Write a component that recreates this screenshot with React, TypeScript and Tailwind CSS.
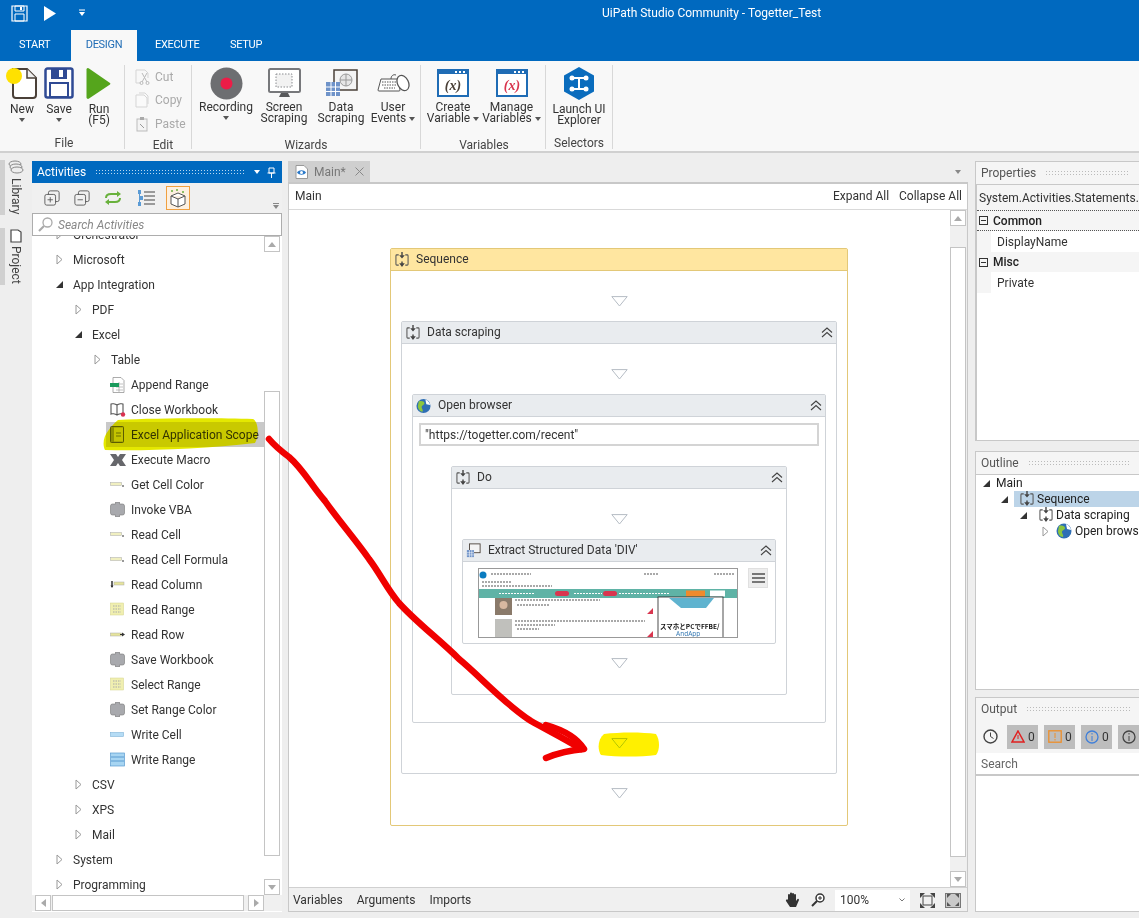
import type { ReactNode } from 'react'

const font = "font-['Roboto','Noto_Sans',sans-serif]"

function Caret({ className = '' }: { className?: string }) {
    return <span className={`inline-block w-0 h-0 border-x-[3.5px] border-x-transparent border-t-[4px] border-t-[#555] ${className}`} />
}

// ribbon icons
function NewIcon() {
    return (
        <svg width="32" height="34" viewBox="0 0 32 34">
            <path d="M7 3h14l9 9v17a3 3 0 0 1-3 3H10a3 3 0 0 1-3-3z" fill="#fff" stroke="#4a4038" strokeWidth="2" />
            <path d="M21 3v9h9" fill="#eee" stroke="#4a4038" strokeWidth="1.5" />
            <circle cx="8" cy="10" r="8" fill="#ffe100" />
        </svg>
    )
}
function SaveIcon() {
    return (
        <svg width="30" height="32" viewBox="0 0 30 32">
            <path d="M1.500 3.500a2 2 0 0 1 2-2h23a2 2 0 0 1 2 2v25a2 2 0 0 1-2 2h-23a2 2 0 0 1-2-2z" fill="#fff" stroke="#2f4a94" strokeWidth="2.500" />
            <rect x="7" y="1" width="16" height="11" fill="#2f4a94" />
            <rect x="15" y="3" width="4" height="7" fill="#fff" />
            <rect x="6" y="16" width="18" height="14" fill="#fff" stroke="#2f4a94" strokeWidth="2" />
        </svg>
    )
}
function RunIcon() {
    return (
        <svg width="26" height="33" viewBox="0 0 26 33">
            <path d="M3 1.500 24 16a1 1 0 0 1 0 1.500L3 31.500a1.500 1.500 0 0 1-2.500-1V3a1.500 1.500 0 0 1 2.500-1.500z" fill="#55a51c" />
        </svg>
    )
}
function RecordIcon() {
    return (
        <svg width="33" height="33" viewBox="0 0 33 33">
            <circle cx="16.500" cy="16.500" r="16" fill="#6d6e71" />
            <circle cx="16.500" cy="16.500" r="6" fill="#ed1c47" />
        </svg>
    )
}
function ScreenIcon() {
    return (
        <svg width="33" height="31" viewBox="0 0 33 31">
            <rect x="1" y="1" width="31" height="23" rx="1.500" fill="#fff" stroke="#77787b" strokeWidth="2" />
            <rect x="8" y="6" width="16" height="13" fill="#f2f2f2" stroke="#8a8c90" strokeWidth="1" strokeDasharray="1.500 1.500" />
            <path d="M13 25h7l2 4H11z" fill="#58595b" />
        </svg>
    )
}
function DataIcon() {
    return (
        <svg width="33" height="28" viewBox="0 0 33 28">
            <rect x="9" y="1" width="23" height="20" fill="#f4f4f4" stroke="#4a4038" strokeWidth="1.500" />
            <circle cx="21" cy="11" r="6" fill="#e6e6e6" stroke="#999" />
            <path d="M15 11h12M21 5v12" stroke="#999" />
            <rect x="1" y="13" width="14" height="14" fill="#6f93c9" />
            <path d="M1 18h14M1 22.500h14M6 13v14M10.500 13v14" stroke="#fff" />
        </svg>
    )
}
function UserEventsIcon() {
    return (
        <svg width="33" height="20" viewBox="0 0 33 20">
            <path d="M4 6h17l2 11a1 1 0 0 1-1 1H2a1 1 0 0 1-1-1z" fill="#fff" stroke="#555" />
            <path d="M5 9h15M5 12h15M7 15h11" stroke="#555" strokeDasharray="1.500 1" />
            <path d="M14 6c0-3 2-5 5-4" fill="none" stroke="#555" />
            <ellipse cx="26" cy="10" rx="5.500" ry="8" transform="rotate(-25 26 10)" fill="#fff" stroke="#555" strokeWidth="1.300" />
        </svg>
    )
}
function VarIcon({ color }: { color: string }) {
    return (
        <svg width="32" height="28" viewBox="0 0 32 28">
            <rect width="32" height="28" fill="#1f6cb5" />
            <rect x="2" y="5" width="28" height="21" fill="#fff" />
            <rect x="18" y="2" width="2" height="2" fill="#fff" />
            <rect x="22" y="2" width="2" height="2" fill="#fff" />
            <rect x="26" y="2" width="2" height="2" fill="#fff" />
            <text x="16" y="21" textAnchor="middle" fontSize="14" fontWeight="700" fontStyle="italic" fontFamily="Liberation Serif, serif" fill={color}>(x)</text>
        </svg>
    )
}
function HexIcon() {
    return (
        <svg width="32" height="33" viewBox="0 0 32 33">
            <path d="M16 0 31 8.500v16L16 33 1 24.500v-16z" fill="#0a6cbd" />
            <path d="M10 11h12M16 11v11M10 22h12" stroke="#fff" strokeWidth="2" />
            <circle cx="9" cy="11" r="2.500" fill="#fff" /><circle cx="23" cy="11" r="2.500" fill="#fff" />
            <circle cx="9" cy="22" r="2.500" fill="#fff" /><circle cx="23" cy="22" r="2.500" fill="#fff" />
        </svg>
    )
}

function RibbonBtn({ w, icon, lines, caret, caretInline, top }: { w: number; icon: ReactNode; lines: string[]; caret?: boolean; caretInline?: boolean; top: string }) {
    return (
        <div className="flex flex-col items-center" style={{ width: w }}>
            <div className="h-[34px] flex items-center justify-center">{icon}</div>
            <div className={`${top} text-center leading-[11px] text-[#333] text-[12px] whitespace-nowrap`}>
                {lines.map((l, i) => (
                    <div key={l}>{l}{caretInline && i === lines.length - 1 && <Caret className="ml-[3px] mb-[1px]" />}</div>
                ))}
            </div>
            {caret && <Caret className="mt-[3px]" />}
        </div>
    )
}

function RibbonGroup({ label, children, className = '', low }: { label: string; children: ReactNode; className?: string; low?: boolean }) {
    return (
        <div className={`flex flex-col h-[84px] border-r border-[#d8d8d8] ${className}`}>
            <div className="flex flex-1 pt-[1px]">{children}</div>
            <div className={`text-center text-[12px] text-[#444] leading-[14px] ${low ? '-mb-[3px]' : '-mb-[1px]'}`}>{label}</div>
        </div>
    )
}

function EditRow({ label, icon }: { label: string; icon: ReactNode }) {
    return (
        <div className="flex items-center h-[23.500px] gap-[5px] text-[12px] text-[#aaa]">
            <svg width="15" height="16" viewBox="0 0 15 16">{icon}</svg>
            {label}
        </div>
    )
}

function Ribbon() {
    return (
        <div className="h-[92px] bg-[#f8f8f8] border-b-2 border-[#d0d0d0] flex items-start pt-[4px] shrink-0">
            <RibbonGroup label="File" className="w-[125px] pl-[4px]">
                <RibbonBtn w={36} icon={<NewIcon />} lines={['New']} caret top="mt-[4px]" />
                <RibbonBtn w={38} icon={<SaveIcon />} lines={['Save']} caret top="mt-[4px]" />
                <RibbonBtn w={42} icon={<RunIcon />} lines={['Run', '(F5)']} top="mt-[4px]" />
            </RibbonGroup>
            <RibbonGroup label="Edit" low className="w-[67px] pl-[10px]">
                <div className="flex flex-col -mt-[1px]">
                    <EditRow label="Cut" icon={<><path d="M1 1h9l3 3v5M1 1v13h5" fill="none" stroke="#d5d5d5" /><path d="M7 4l5 9M12 4l-5 9" stroke="#bbb" /><circle cx="6.500" cy="14" r="1.500" fill="none" stroke="#bbb" /><circle cx="12.500" cy="14" r="1.500" fill="none" stroke="#bbb" /></>} />
                    <EditRow label="Copy" icon={<><path d="M1 3h8l3 3v9H1z" fill="#fafafa" stroke="#d5d5d5" /><path d="M4 1h6l3 3v8" fill="none" stroke="#d5d5d5" /></>} />
                    <EditRow label="Paste" icon={<><rect x="2" y="3" width="10" height="12" fill="#f4f4f4" stroke="#bbb" /><rect x="5" y="1" width="4" height="3" fill="#aaa" /><path d="M5 8l4 4" stroke="#999" /></>} />
                </div>
            </RibbonGroup>
            <RibbonGroup label="Wizards" low className="w-[229px]">
                <RibbonBtn w={68} icon={<RecordIcon />} lines={['Recording']} caret top="mt-[2px]" />
                <RibbonBtn w={48} icon={<ScreenIcon />} lines={['Screen', 'Scraping']} top="mt-[2px]" />
                <RibbonBtn w={66} icon={<DataIcon />} lines={['Data', 'Scraping']} top="mt-[2px]" />
                <RibbonBtn w={38} icon={<UserEventsIcon />} lines={['User', 'Events']} caretInline top="mt-[2px]" />
            </RibbonGroup>
            <RibbonGroup label="Variables" low className="w-[125px] pl-[2px]">
                <RibbonBtn w={60} icon={<VarIcon color="#4a4038" />} lines={['Create', 'Variable']} caretInline top="mt-[2px]" />
                <div className="w-[1px]" />
                <RibbonBtn w={55} icon={<VarIcon color="#d9364f" />} lines={['Manage', 'Variables']} caretInline top="mt-[2px]" />
            </RibbonGroup>
            <RibbonGroup label="Selectors" className="w-[67px]">
                <RibbonBtn w={66} icon={<HexIcon />} lines={['Launch UI', 'Explorer']} top="mt-[4px]" />
            </RibbonGroup>
        </div>
    )
}

function TitleBar() {
    return (
        <div className="h-[61px] bg-[#0069bf] text-white shrink-0 flex flex-col">
            <div className="h-[30px] flex items-center pl-[11px]">
                <svg width="17" height="18" viewBox="0 0 17 18" className="mb-[4px]">
                    <path d="M1 2h15v15H1z" fill="none" stroke="#fff" strokeWidth="1.200" />
                    <path d="M4 2h9v5H4zM4 10h9v7H4z" fill="none" stroke="#fff" />
                    <rect x="9" y="3" width="2" height="3" fill="#fff" />
                </svg>
                <svg width="14" height="17" viewBox="0 0 14 17" className="ml-[15px] mb-[4px]"><path d="M1 1 13 8.500 1 16z" fill="#fff" /></svg>
                <svg width="8" height="8" viewBox="0 0 8 8" className="ml-[21px] mb-[4px]"><path d="M1 1h6" stroke="#fff" /><path d="M1 3h6L4 7z" fill="#fff" /></svg>
                <div className="text-[12px] ml-[516px] mb-[4px] whitespace-nowrap">UiPath Studio Community - Togetter_Test</div>
            </div>
            <div className="flex h-[31px] items-center text-[11px] tracking-[-0.3px] uppercase">
                <div className="pl-[19px] w-[71px]">Start</div>
                <div className="w-[66px] h-full bg-[#f8f8f8] text-[#1f6cb5] flex items-center justify-center">Design</div>
                <div className="pl-[18px] w-[93px]">Execute</div>
                <div>Setup</div>
            </div>
        </div>
    )
}

function Gripper({ light }: { light?: boolean }) {
    return <div className={`flex-1 h-[7px] mx-[9px] ${light ? "bg-[radial-gradient(#b9d8f0_0.7px,transparent_0.8px)]" : "bg-[radial-gradient(#bbb_0.7px,transparent_0.8px)]"} bg-[length:3px_3px]`} />
}

function ArrowOpen() {
    return <svg width="7" height="11" viewBox="0 0 7 11"><path d="M1 1 6 5.500 1 10z" fill="#fff" stroke="#999" /></svg>
}
function ArrowDown() {
    return <svg width="7" height="7" viewBox="0 0 7 7"><path d="M7 0v7H0z" fill="#333" /></svg>
}

// little activity icons in the tree
function LeafIcon({ kind }: { kind: string }) {
    if (kind === 'gear') return (
        <svg width="15" height="15" viewBox="0 0 15 15"><path d="M5.500 0h4v2h3a2 2 0 0 1 2 2v7a2 2 0 0 1-2 2h-3v2h-4v-2h-3a2 2 0 0 1-2-2V4a2 2 0 0 1 2-2h3z" fill="#a8a9ad" stroke="#777" strokeWidth="0.600" /></svg>
    )
    if (kind === 'cell') return <svg width="15" height="15" viewBox="0 0 15 15"><rect x="0.500" y="5.500" width="11" height="3" fill="#f0efc0" stroke="#aaa" strokeWidth="0.500" /><rect x="12" y="8" width="2" height="2" fill="#999" /></svg>
    if (kind === 'column') return <svg width="15" height="15" viewBox="0 0 15 15"><rect x="4" y="5" width="10" height="3" fill="#e6e49c" stroke="#aaa" strokeWidth="0.500" /><path d="M2 4v6" stroke="#333" strokeWidth="1.500" /><path d="M0.500 8.500h3L2 11z" fill="#333" /></svg>
    if (kind === 'range') return <svg width="15" height="15" viewBox="0 0 15 15"><rect x="0.500" y="1" width="13" height="12" fill="#f0efb0" stroke="#d4d28a" strokeWidth="0.500" /><path d="M3 4h8M3 7h8M3 10h8" stroke="#aaa" strokeDasharray="1.500 1" /></svg>
    if (kind === 'row') return <svg width="15" height="15" viewBox="0 0 15 15"><rect x="0.500" y="6" width="11" height="3" fill="#e6e49c" stroke="#aaa" strokeWidth="0.500" /><path d="M10 7.500h3" stroke="#333" /><path d="M12 5.500l3 2-3 2z" fill="#333" /></svg>
    if (kind === 'wcell') return <svg width="15" height="15" viewBox="0 0 15 15"><rect x="0.500" y="5.500" width="13" height="4" fill="#b5dcf5" stroke="#7fb2d8" strokeWidth="0.600" /></svg>
    if (kind === 'wrange') return <svg width="15" height="15" viewBox="0 0 15 15"><rect x="0.500" y="1" width="14" height="13" fill="#a7d5f2" stroke="#5a9bd0" strokeWidth="0.700" /><path d="M1 5h13M1 9h13" stroke="#5a9bd0" /></svg>
    if (kind === 'append') return <svg width="15" height="16" viewBox="0 0 15 16"><path d="M3 .5h8l3 3v12H3z" fill="#fff" stroke="#888" strokeWidth="0.700" /><path d="M6 7h7M6 10h7M6 13h7M9 5v10" stroke="#999" strokeWidth="0.600" /><rect x="0" y="6" width="9" height="4" fill="#1a9a5c" /></svg>
    if (kind === 'close') return <svg width="16" height="15" viewBox="0 0 16 15"><path d="M7 3C5 1.500 2 1.500 1 2v10c1-.5 4-.5 6 1 2-1.500 5-1.500 6-1V2c-1-.5-4-.5-6 1zM7 3v10" fill="#fff" stroke="#555" strokeWidth="1.100" /><circle cx="13" cy="12.500" r="2.200" fill="#d9304f" /></svg>
    if (kind === 'scope') return <svg width="15" height="17" viewBox="0 0 15 17"><rect x="0.500" y="0.500" width="13" height="16" rx="1" fill="#8f9052" stroke="#5b5c33" /><rect x="4" y="1.500" width="9" height="14" fill="#c4c45c" /><path d="M6 7h5M6 10h5" stroke="#6d6e3a" /></svg>
    if (kind === 'macro') return <svg width="16" height="14" viewBox="0 0 16 14"><path d="M0 1h6l2 3 2-3h6l-4 6 4 6h-6L8 10l-2 3H0l4-6z" fill="#66676b" /></svg>
    return null
}

function TreeRow({ level, label, arrow, icon, selected }: { level: number; label: string; arrow?: 'open' | 'down'; icon?: string; selected?: boolean }) {
    const pad = [55, 74, 93, 106][level]
    return (
        <div className="h-[25px] flex items-center text-[12px] text-[#333] whitespace-nowrap" style={{ paddingLeft: pad - 32 }}>
            {arrow ? (
                <span className="w-[18px] flex items-center pl-[1px]">{arrow === 'open' ? <ArrowOpen /> : <ArrowDown />}</span>
            ) : (
                <span className={`h-full w-[25px] flex items-center pl-[4px] ${selected ? 'bg-[#c9c9c9]' : ''}`}>{icon && <LeafIcon kind={icon} />}</span>
            )}
            <span className={`h-full flex items-center ${selected ? 'bg-[#c9c9c9] pr-[5px]' : ''}`}>{label}</span>
        </div>
    )
}

function ScrollBtn({ dir }: { dir: 'up' | 'down' | 'right' | 'left' }) {
    const path = { up: 'M0 5 4 0l4 5z', down: 'M0 0h8L4 5z', right: 'M0 0l5 4-5 4z', left: 'M5 0 0 4l5 4z' }[dir]
    const box = dir === 'left' || dir === 'right' ? '0 0 5 8' : '0 0 8 5'
    return (
        <div className="w-[16px] h-[16px] bg-white border border-[#c4c4c4] flex items-center justify-center shrink-0">
            <svg width={dir === 'left' || dir === 'right' ? 5 : 8} height={dir === 'left' || dir === 'right' ? 8 : 5} viewBox={box}><path d={path} fill="#aaa" /></svg>
        </div>
    )
}

const treeRows: { level: number; label: string; arrow?: 'open' | 'down'; icon?: string; selected?: boolean }[] = [
    { level: 0, label: 'Orchestrator', arrow: 'open' },
    { level: 0, label: 'Microsoft', arrow: 'open' },
    { level: 0, label: 'App Integration', arrow: 'down' },
    { level: 1, label: 'PDF', arrow: 'open' },
    { level: 1, label: 'Excel', arrow: 'down' },
    { level: 2, label: 'Table', arrow: 'open' },
    { level: 3, label: 'Append Range', icon: 'append' },
    { level: 3, label: 'Close Workbook', icon: 'close' },
    { level: 3, label: 'Excel Application Scope', icon: 'scope', selected: true },
    { level: 3, label: 'Execute Macro', icon: 'macro' },
    { level: 3, label: 'Get Cell Color', icon: 'cell' },
    { level: 3, label: 'Invoke VBA', icon: 'gear' },
    { level: 3, label: 'Read Cell', icon: 'cell' },
    { level: 3, label: 'Read Cell Formula', icon: 'cell' },
    { level: 3, label: 'Read Column', icon: 'column' },
    { level: 3, label: 'Read Range', icon: 'range' },
    { level: 3, label: 'Read Row', icon: 'row' },
    { level: 3, label: 'Save Workbook', icon: 'gear' },
    { level: 3, label: 'Select Range', icon: 'range' },
    { level: 3, label: 'Set Range Color', icon: 'gear' },
    { level: 3, label: 'Write Cell', icon: 'wcell' },
    { level: 3, label: 'Write Range', icon: 'wrange' },
    { level: 1, label: 'CSV', arrow: 'open' },
    { level: 1, label: 'XPS', arrow: 'open' },
    { level: 1, label: 'Mail', arrow: 'open' },
    { level: 0, label: 'System', arrow: 'open' },
    { level: 0, label: 'Programming', arrow: 'open' },
]

function ActivitiesPanel() {
    return (
        <div className="w-[250px] h-[751px] flex flex-col shrink-0">
            <div className="h-[22px] bg-[#0069bf] text-white text-[12px] flex items-center pl-[5px] pr-[6px] shrink-0">
                Activities
                <Gripper light />
                <Caret className="border-t-white mr-[7px]" />
                <svg width="9" height="11" viewBox="0 0 9 11"><path d="M2 1h5v5H2zM0.500 6h8M4.500 6v5" fill="none" stroke="#fff" /></svg>
            </div>
            <div className="h-[30px] bg-[#f0f0f0] flex items-center pl-[12px] gap-[14px] shrink-0 relative">
                <svg width="16" height="16" viewBox="0 0 18 18"><rect x="5" y="1" width="12" height="12" rx="2" fill="none" stroke="#555" /><rect x="1" y="5" width="12" height="12" rx="2" fill="#f0f0f0" stroke="#555" /><path d="M4 11h6M7 8v6" stroke="#555" /></svg>
                <svg width="16" height="16" viewBox="0 0 18 18"><rect x="5" y="1" width="12" height="12" rx="2" fill="none" stroke="#555" /><rect x="1" y="5" width="12" height="12" rx="2" fill="#f0f0f0" stroke="#555" /><path d="M4 11h6" stroke="#555" /></svg>
                <svg width="19" height="14" viewBox="0 0 19 14"><path d="M2 7c0-3 2-4 5-4h7M16 7c0 3-2 4-5 4H4" fill="none" stroke="#69b13c" strokeWidth="2" /><path d="M13 0l4 3-4 3zM5 8l-4 3 4 3z" fill="#69b13c" /></svg>
                <svg width="18" height="16" viewBox="0 0 18 16"><path d="M7 2h11M7 6h11M7 10h11M7 14h11" stroke="#444" /><rect x="1" y="0" width="3" height="4" fill="#5b9bd5" /><rect x="3" y="6" width="3" height="4" fill="#5b9bd5" /><rect x="1" y="12" width="3" height="4" fill="#5b9bd5" /><path d="M2.500 4v8" stroke="#5b9bd5" /></svg>
                <div className="w-[24px] h-[24px] -ml-[3px] border border-[#f0a040] bg-[#fdf0e0] flex items-center justify-center">
                    <svg width="18" height="19" viewBox="0 0 18 19"><path d="M2 7l7-3 7 3v8l-7 3-7-3zM2 7l7 3 7-3M9 10v8" fill="#fff" stroke="#555" /><circle cx="3" cy="2" r="1" fill="#69b13c" /><circle cx="8" cy="1" r="1" fill="#69b13c" /><circle cx="14" cy="3" r="1" fill="#69b13c" /></svg>
                </div>
                <div className="absolute right-[3px] bottom-[4px] flex flex-col items-center gap-[1px]">
                    <div className="w-[6px] h-[1px] bg-[#888]" />
                    <Caret className="border-t-[#888] border-x-[3px] border-t-[3px]" />
                </div>
            </div>
            <div className="h-[23px] bg-white border border-[#adadad] flex items-center pl-[5px] gap-[5px] shrink-0 text-[12px] italic text-[#888]">
                <svg width="15" height="15" viewBox="0 0 15 15"><circle cx="9.500" cy="5.500" r="4.500" fill="none" stroke="#aaa" strokeWidth="1.300" /><path d="M6 9l-5 5" stroke="#aaa" strokeWidth="2.200" /></svg>
                Search Activities
            </div>
            <div className="flex-1 bg-white flex min-h-0 overflow-hidden">
                <div className="flex-1 overflow-hidden relative">
                    <div className="-mt-[14px]">
                        {treeRows.map(r => <TreeRow key={r.label} {...r} />)}
                    </div>
                </div>
            </div>
        </div>
    )
}

function SeqIcon() {
    return (
        <svg width="14" height="16" viewBox="0 0 15 17">
            <path d="M4 3H2a1 1 0 0 0-1 1v9a1 1 0 0 0 1 1h2M11 3h2a1 1 0 0 1 1 1v9a1 1 0 0 1-1 1h-2" fill="none" stroke="#555" strokeWidth="1.100" />
            <path d="M7.500 0v4M7.500 10v4" stroke="#444" strokeWidth="1.500" />
            <path d="M4.500 3.500h6l-3 3.500zM4.500 12h6l-3 4z" fill="#444" />
        </svg>
    )
}
function GlobeIcon() {
    return (
        <svg width="16" height="16" viewBox="0 0 16 16">
            <circle cx="8" cy="8" r="7.500" fill="#2f6fb5" />
            <path d="M3 3c3-1 6 0 6 2s-3 2-3 4 2 3 1 5c-3 0-5-3-5-6z" fill="#8cc63f" />
            <path d="M10 1c3 1 5 4 5 6l-4-1z" fill="#fff" />
        </svg>
    )
}
function ExtractIcon() {
    return (
        <svg width="17" height="17" viewBox="0 0 17 17">
            <rect x="4" y="1" width="12" height="10" fill="#f4f4f4" stroke="#4a4038" />
            <rect x="1" y="8" width="8" height="8" fill="#6f93c9" />
            <path d="M1 11h8M1 13.500h8M4 8v8M6.500 8v8" stroke="#fff" strokeWidth="0.600" />
        </svg>
    )
}

function Drop({ className = '' }: { className?: string }) {
    return (
        <div className={`flex justify-center ${className}`}>
            <svg width="17" height="11" viewBox="0 0 17 11"><path d="M.8.6h15.400L8.500 10z" fill="#fff" stroke="#b5bcc4" /></svg>
        </div>
    )
}

function Chevrons() {
    return (
        <svg width="12" height="11" viewBox="0 0 12 11" className="ml-auto mr-[3px]">
            <path d="M1 5.500 6 1l5 4.500M1 10l5-4.500 5 4.500" fill="none" stroke="#444" strokeWidth="1.100" />
        </svg>
    )
}

function Node({ title, icon, className = '', bodyClass = '', children, selected, collapse = true }: { title: string; icon: ReactNode; className?: string; bodyClass?: string; children: ReactNode; selected?: boolean; collapse?: boolean }) {
    return (
        <div className={`border rounded-[2px] bg-white ${selected ? 'border-[#e3c878]' : 'border-[#cfd3d8]'} ${className}`}>
            <div className={`h-[22px] flex items-center pl-[3px] gap-[7px] text-[12px] text-[#333] border-b ${selected ? 'bg-[#ffe6a0] border-[#e3c878]' : 'bg-[#e9ecef] border-[#cfd3d8]'}`}>
                <span className="w-[15px] flex justify-center">{icon}</span>
                <span className="-mt-[2px]">{title}</span>
                {collapse && <Chevrons />}
            </div>
            <div className={bodyClass}>{children}</div>
        </div>
    )
}

function Thumbnail() {
    return (
        <svg width="260" height="70" viewBox="0 0 258 68" className="border border-[#999] shrink-0">
            <rect width="258" height="68" fill="#fff" />
            <circle cx="4" cy="6" r="3.500" fill="#0a7cc0" />
            <path d="M12 5h40M165 5h14M235 5h20M3 13h30M3 17h70" stroke="#555" strokeWidth="1.200" strokeDasharray="2 1" />
            <rect y="20" width="258" height="9" fill="#5fb3a6" />
            <path d="M20 24.500h36M95 24.500h28M140 24.500h50" stroke="#fff" strokeDasharray="2 1" />
            <rect x="76" y="22" width="14" height="5" rx="2.500" fill="#d9364f" />
            <rect x="124" y="22" width="14" height="5" rx="2.500" fill="#d9364f" />
            <rect x="207" y="21.500" width="19" height="6" fill="#f08a2c" />
            <rect x="231" y="21.500" width="15" height="6" fill="#fff" />
            <rect x="16" y="29" width="17" height="17" fill="#8a7a6a" />
            <circle cx="24.500" cy="36" r="4" fill="#d8b8a0" />
            <rect x="16" y="50" width="17" height="18" fill="#c0c0bc" />
            <path d="M36 31h85M38 36h32M36 52h130M36 56h40M38 60h22" stroke="#555" strokeWidth="1.200" strokeDasharray="2 1" />
            <path d="M168 45l6-6v6zM168 68l6-6v6z" fill="#d9364f" />
            <rect x="179" y="28" width="65" height="42" fill="#fff" stroke="#222" strokeWidth="0.800" />
            <path d="M190 29h45l-8 10h-25z" fill="#5fb3cf" />
            <text x="181" y="60" fontSize="6.500" fontWeight="700" fill="#111" fontFamily="Noto Sans CJK JP, sans-serif">スマホとPCでFFBE/</text>
            <text x="197" y="67" fontSize="6.500" fill="#3a7cb5" fontFamily="Noto Sans, sans-serif">AndApp</text>
        </svg>
    )
}

function Canvas() {
    return (
        <div className="flex-1 bg-white pt-[38px] pl-[101px] overflow-hidden">
            <Node title="Sequence" icon={<SeqIcon />} selected collapse={false} className="w-[458px] h-[578px]" bodyClass="px-[10px]">
                <Drop className="mt-[25px] mb-[14px]" />
                <Node title="Data scraping" icon={<SeqIcon />} className="w-[436px] h-[453px]" bodyClass="px-[10px]">
                    <Drop className="mt-[25px] mb-[14px]" />
                    <Node title="Open browser" icon={<GlobeIcon />} className="w-[414px] h-[329px]" bodyClass="px-[6px]">
                        <div className="mt-[6px] h-[23px] pt-[1px] border-2 border-[#d4d4d4] flex items-center px-[4px] text-[12px] text-[#333]">"https://togetter.com/recent"</div>
                        <Node title="Do" icon={<SeqIcon />} className="w-[336px] h-[229px] mt-[20px] ml-[32px]" bodyClass="px-[10px]">
                            <Drop className="mt-[25px] mb-[14px]" />
                            <Node title="Extract Structured Data 'DIV'" icon={<ExtractIcon />} className="w-[314px] h-[105px]">
                                <div className="flex pl-[15px] pt-[6px] gap-[10px]">
                                    <Thumbnail />
                                    <div className="w-[20px] h-[20px] bg-[#ededed] border border-[#e0e0e0] flex flex-col justify-center items-center gap-[2px]">
                                        <div className="w-[13px] h-[2px] bg-[#777]" />
                                        <div className="w-[13px] h-[2px] bg-[#777]" />
                                        <div className="w-[13px] h-[2px] bg-[#777]" />
                                    </div>
                                </div>
                            </Node>
                            <Drop className="mt-[14px]" />
                        </Node>
                    </Node>
                    <Drop className="mt-[15px]" />
                </Node>
                <Drop className="mt-[14px]" />
            </Node>
        </div>
    )
}

function DocPanel() {
    return (
        <div className="w-[680px] h-[752px] flex flex-col shrink-0">
            <div className="h-[22px] flex items-end justify-between shrink-0">
                <div className="w-[82px] h-[21px] bg-[#cfcfcf] flex items-center pl-[7px] gap-[6px] text-[12px] text-[#777]">
                    <svg width="13" height="14" viewBox="0 0 13 14"><path d="M1 .5h8l3.500 3.500v9.500H1z" fill="#fff" stroke="#999" /><path d="M2 7.500c2-3 7-3 9 0-2 3-7 3-9 0z" fill="#2a78c8" /><circle cx="6.500" cy="7.500" r="1.500" fill="#fff" /></svg>
                    Main*
                    <svg width="9" height="9" viewBox="0 0 9 9" className="ml-[3px]"><path d="M.5.500l8 8M8.500.500l-8 8" stroke="#888" /></svg>
                </div>
                <Caret className="border-t-[#888] mb-[8px] mr-[7px]" />
            </div>
            <div className="flex-1 min-h-0 flex flex-col border-t-2 border-x border-b border-[#c8c8c8]">
                <div className="h-[26px] bg-white border-b border-[#d9d9d9] flex items-center justify-between pl-[6px] pr-[5px] pb-[2px] text-[12px] text-[#333] shrink-0">
                    <span>Main</span>
                    <span className="flex gap-[10px]"><span>Expand All</span><span>Collapse All</span></span>
                </div>
                <div className="flex-1 flex min-h-0">
                    <Canvas />
                    <div className="w-[16px] flex flex-col bg-[#f0f0f0] shrink-0 mr-[1px]">
                        <ScrollBtn dir="up" />
                        <div className="flex-1 mt-[21px] mb-[14px] bg-white border border-[#c4c4c4]" />
                        <ScrollBtn dir="down" />
                    </div>
                </div>
                <div className="h-[24px] bg-[#f0f0f0] border-t border-[#d0d0d0] flex items-center pl-[4px] pr-[6px] pt-[1px] text-[12px] text-[#333] shrink-0">
                    <span className="flex gap-[14px]"><span>Variables</span><span>Arguments</span><span>Imports</span></span>
                    <svg width="15" height="16" viewBox="0 0 15 16" className="ml-auto"><path d="M3 8V3a1 1 0 0 1 2 0V1.500a1 1 0 0 1 2 0V2a1 1 0 0 1 2 0v1a1 1 0 0 1 2 0v6l1.500-2a1 1 0 0 1 1.500 1l-3 7H5L1 9a1 1 0 0 1 2-1z" fill="#333" /></svg>
                    <svg width="14" height="14" viewBox="0 0 14 14" className="ml-[11px]"><circle cx="9" cy="5" r="4" fill="#fff" stroke="#333" strokeWidth="1.500" /><path d="M7 5h4M9 3v4" stroke="#333" /><path d="M6 8l-5 5" stroke="#333" strokeWidth="2" /></svg>
                    <div className="w-[75px] h-[21px] bg-white ml-[10px] flex items-center justify-between px-[5px]">
                        100%
                        <svg width="6" height="4" viewBox="0 0 6 4"><path d="M.5.500 3 3 5.500.500" fill="none" stroke="#777" /></svg>
                    </div>
                    <svg width="15" height="15" viewBox="0 0 15 15" className="ml-[10px]"><path d="M3 3h9v9H3z" fill="none" stroke="#444" /><path d="M0 0h5L0 5zM15 0v5l-5-5zM0 15v-5l5 5zM15 15h-5l5-5z" fill="#444" /></svg>
                    <div className="w-[16px] h-[15px] ml-[10px] bg-[#c9c9c9] border border-[#777] flex items-center justify-center">
                        <svg width="12" height="12" viewBox="0 0 12 12"><path d="M0 4V0h4zM12 4V0H8zM0 8v4h4zM12 8v4H8z" fill="#555" /></svg>
                    </div>
                </div>
            </div>
        </div>
    )
}

function SidePanel({ title, className, children }: { title: string; className: string; children: ReactNode }) {
    return (
        <div className={`bg-[#f5f5f5] border border-[#c8c8c8] border-r-0 flex flex-col ${className}`}>
            <div className="h-[22px] flex items-center pl-[5px] text-[12px] text-[#555] shrink-0">
                {title}
                <Gripper />
            </div>
            {children}
        </div>
    )
}

function PropRow({ label }: { label: string }) {
    return (
        <div className="pl-[14px]">
            <div className="h-[21px] bg-white flex items-center pl-[6px] text-[12px] text-[#333]">{label}</div>
        </div>
    )
}

function PropGroup({ label, focused }: { label: string; focused?: boolean }) {
    return (
        <div className={`flex items-center gap-[5px] pl-[2px] text-[12px] font-medium text-[#222] ${focused ? 'h-[21px] border-y border-dotted border-[#555]' : 'h-[20px]'}`}>
            <span className="w-[9px] h-[9px] border border-[#333] flex items-center justify-center"><span className="w-[5px] h-[1px] bg-[#333]" /></span>
            {label}
        </div>
    )
}

function OutlineRow({ pad, arrow, icon, label, selected }: { pad: number; arrow: ReactNode; icon?: ReactNode; label: string; selected?: boolean }) {
    return (
        <div className="h-[16px] flex items-center text-[12px] text-[#222] whitespace-nowrap" style={{ paddingLeft: pad }}>
            <span className="w-[13px] flex items-center shrink-0">{arrow}</span>
            <span className={`flex flex-1 items-center gap-[3px] h-[16px] ${icon ? 'pl-[6px]' : ''} ${selected ? 'bg-[#bcd4e8]' : ''}`}>{icon}{label}</span>
        </div>
    )
}

function CountBadge({ icon }: { icon: ReactNode }) {
    return <div className="h-[24px] w-[31px] shrink-0 bg-[#bdbdbd] flex items-center pl-[4px] gap-[3px] text-[12px] text-[#333]">{icon}0</div>
}

function RightColumn() {
    return (
        <div className="w-[164px] h-[751px] mt-[1px] flex flex-col shrink-0 gap-[10px]">
            <SidePanel title="Properties" className="h-[280px]">
                <div className="flex-1 bg-white border-t border-l border-[#c8c8c8] overflow-hidden">
                    <div className="h-[25px] bg-[#f5f5f5] flex items-center pl-[2px] text-[12px] text-[#333] whitespace-nowrap">System.Activities.Statements.Sequence</div>
                    <div className="bg-[#f5f5f5]">
                        <PropGroup label="Common" focused />
                        <PropRow label="DisplayName" />
                        <PropGroup label="Misc" />
                        <PropRow label="Private" />
                    </div>
                </div>
            </SidePanel>
            <SidePanel title="Outline" className="h-[239px] -mb-[3px]">
                <div className="flex-1 bg-white border-t border-[#c8c8c8] overflow-hidden">
                    <OutlineRow pad={7} arrow={<ArrowDown />} label="Main" />
                    <OutlineRow pad={25} arrow={<ArrowDown />} icon={<SeqIcon />} label="Sequence" selected />
                    <OutlineRow pad={44} arrow={<ArrowDown />} icon={<SeqIcon />} label="Data scraping" />
                    <OutlineRow pad={61} arrow={<span className="ml-[5px]"><ArrowOpen /></span>} icon={<GlobeIcon />} label="Open browser" />
                </div>
            </SidePanel>
            <SidePanel title="Output" className="flex-1">
                <div className="h-[33px] flex items-center pl-[7px] gap-[6px] overflow-hidden shrink-0">
                    <svg width="15" height="15" viewBox="0 0 15 15" className="mr-[3px] shrink-0"><circle cx="7.500" cy="7.500" r="6.500" fill="none" stroke="#444" strokeWidth="1.400" /><path d="M7.500 3.500v4l3 2" fill="none" stroke="#444" /></svg>
                    <CountBadge icon={<svg width="14" height="13" viewBox="0 0 14 13"><path d="M7 1 13 12H1z" fill="none" stroke="#e02020" strokeWidth="1.500" /><path d="M7 5v4" stroke="#e02020" /></svg>} />
                    <CountBadge icon={<svg width="14" height="13" viewBox="0 0 14 13"><rect x=".8" y=".8" width="12.400" height="11.400" fill="none" stroke="#ee8f2a" strokeWidth="1.300" /><path d="M7 3v5M7 9v1.500" stroke="#ee8f2a" /></svg>} />
                    <CountBadge icon={<svg width="14" height="14" viewBox="0 0 14 14"><circle cx="7" cy="7" r="6" fill="none" stroke="#3f7fd9" strokeWidth="1.300" /><path d="M7 6v5M7 3v1.500" stroke="#3f7fd9" /></svg>} />
                    <CountBadge icon={<svg width="14" height="14" viewBox="0 0 14 14"><circle cx="7" cy="7" r="6" fill="none" stroke="#444" strokeWidth="1.300" /><path d="M7 6v5M7 3v1.500" stroke="#444" /></svg>} />
                </div>
                <div className="h-[23px] bg-white border-b-2 border-[#c8c8c8] flex items-center pl-[5px] text-[12px] text-[#666] shrink-0">Search</div>
                <div className="flex-1 bg-white" />
            </SidePanel>
        </div>
    )
}

function SideTab({ label, icon, height }: { label: string; icon: ReactNode; height: string }) {
    return (
        <div className={`flex w-[26px] ${height}`}>
            <div className="w-[5px] bg-[#d0d0d0] shrink-0" />
            <div className="flex-1 flex flex-col items-center">
                {icon}
                <span className="[writing-mode:vertical-rl] text-[12px] text-[#444] leading-[14px] mt-[3px]">{label}</span>
            </div>
        </div>
    )
}

function LeftTabs() {
    return (
        <div className="w-[28px] shrink-0 flex flex-col gap-[13px]">
            <SideTab label="Library" height="h-[55px]" icon={<svg width="17" height="15" viewBox="0 0 17 15"><ellipse cx="8" cy="4" rx="6" ry="3" fill="#eee" stroke="#888" /><ellipse cx="9" cy="7" rx="6" ry="3" fill="#eee" stroke="#888" /><ellipse cx="10" cy="10" rx="6" ry="3" fill="#eee" stroke="#888" /></svg>} />
            <SideTab label="Project" height="h-[57px]" icon={<svg width="12" height="15" viewBox="0 0 12 15"><path d="M1 2h7l3 2v10H1z" fill="#fff" stroke="#444" strokeWidth="1.200" /></svg>} />
        </div>
    )
}

// the hand-drawn red arrow and yellow marker sit on top of the whole window
function Annotations() {
    return (
        <svg width="1139" height="918" viewBox="0 0 1139 918" className="absolute left-0 top-0 pointer-events-none">
            <path className="mix-blend-darken" d="M118 420c40-2 100-2 135-1 6 3 6 18 2 24-50 6-110 8-150 7-3-6-1-14 3-19 3-4 6-8 10-11z" fill="#e4e800" />
            <path className="mix-blend-darken" d="M604 734c16-2 38-2 52 0 4 6 4 16 0 21-16 2-38 2-55 0-4-6-3-16 3-21z" fill="#fff000" />
            <path d="M269 439c5 6 12 12 20 18 14 12 22 28 36 44 14 20 30 38 44 58 12 16 18 30 30 44 18 20 40 36 60 56 22 18 44 44 72 62 14 8 34 18 50 28" fill="none" stroke="#f00000" strokeWidth="6.500" strokeLinecap="round" strokeLinejoin="round" />
            <path d="M546 725c14 4 30 11 38 24-12 1-26 4-38 9" fill="none" stroke="#f00000" strokeWidth="6.500" strokeLinecap="round" strokeLinejoin="round" />
        </svg>
    )
}

export default function App() {
    return (
        <div className={`w-[1139px] h-[918px] overflow-hidden flex flex-col bg-[#eeeeee] relative ${font}`}>
            <TitleBar />
            <Ribbon />
            <div className="flex-1 flex items-start pt-[7px] min-h-0">
                <LeftTabs />
                <div className="w-[4px]" />
                <div className="relative mt-[1px]">
                    <ActivitiesPanel />
                    <div className="absolute left-[232px] top-[75px] w-[16px] bottom-0 flex flex-col">
                        <ScrollBtn dir="up" />
                        <div className="h-[139px]" />
                        <div className="flex-1 bg-white border border-[#c4c4c4] mb-[23px]" />
                        <div className="mb-[17px]"><ScrollBtn dir="down" /></div>
                    </div>
                    <div className="absolute left-0 right-0 bottom-[1px] h-[16px] bg-[#f0f0f0] flex items-center pl-[3px]">
                        <ScrollBtn dir="left" />
                        <div className="w-[192px] h-[16px] bg-white border border-[#c4c4c4] ml-[1px]" />
                        <div className="ml-[4px]"><ScrollBtn dir="right" /></div>
                    </div>
                </div>
                <div className="w-[6px]" />
                <DocPanel />
                <div className="w-[7px]" />
                <RightColumn />
            </div>
            <Annotations />
        </div>
    )
}
